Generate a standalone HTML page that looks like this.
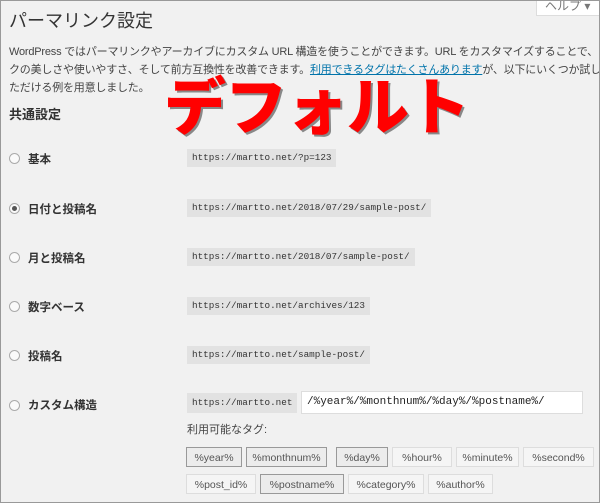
<!DOCTYPE html>
<html><head><meta charset="utf-8"><style>
body{margin:0;width:600px;height:503px;overflow:hidden;background:#f1f1f1;font-family:"Liberation Sans","Noto Sans CJK JP",sans-serif;color:#444;position:relative}
.frame{position:absolute;left:0;top:0;width:598px;height:501px;border:1px solid #999;}
.a{position:absolute;white-space:nowrap}
h1{position:absolute;left:9px;top:7px;margin:0;font-size:18px;font-weight:normal;color:#333}
.help{position:absolute;left:536px;top:-4px;width:70px;height:18px;background:#fff;border:1px solid #ddd;font-size:12px;color:#777;padding-left:8px}
.p{position:absolute;left:9px;top:43px;white-space:nowrap;font-size:11px;letter-spacing:-0.2px;line-height:18px;color:#444}
.p a{color:#0073aa;text-decoration:underline}
.h2{position:absolute;left:9px;top:104px;font-size:13px;font-weight:bold;color:#333}
.r{position:absolute;left:9px;width:9px;height:9px;border:1px solid #aaa;border-radius:50%;background:#fafafa}
.r.on::after{content:"";position:absolute;left:2px;top:2px;width:5px;height:5px;border-radius:50%;background:#555}
.l{position:absolute;left:28px;font-size:11.5px;font-weight:bold;color:#333}
code{position:absolute;left:187px;height:18px;line-height:18px;padding:0 5px;background:#e2e2e2;font-family:"Liberation Mono",monospace;font-size:9.3px;color:#333}
.in{position:absolute;left:301px;top:391px;width:275px;height:21px;background:#fff;border:1px solid #ddd;font-family:"Liberation Mono",monospace;font-size:11px;line-height:21px;padding-left:5px;color:#222}
.t{position:absolute;height:20px;line-height:20px;font-size:10.5px;color:#555;text-align:center;background:#f5f5f5;border:1px solid #ddd;box-sizing:border-box}
.t.s{background:#ececec;border:1px solid #999}
.big{position:absolute;left:164px;top:62px;font-size:62px;line-height:80px;font-weight:900;color:#f00;letter-spacing:-1px;text-shadow:2px 2px 0 #888;font-family:"Noto Sans CJK JP",sans-serif}
</style></head><body>
<div class="help">ヘルプ ▾</div>
<h1>パーマリンク設定</h1>
<div class="p">WordPress ではパーマリンクやアーカイブにカスタム URL 構造を使うことができます。URL をカスタマイズすることで、リン<br>クの美しさや使いやすさ、そして前方互換性を改善できます。<a>利用できるタグはたくさんあります</a>が、以下にいくつか試してい<br>ただける例を用意しました。</div>
<div class="h2">共通設定</div>
<div class="big">デフォルト</div>
<div class="r" style="top:153px"></div><div class="l a" style="top:151px">基本</div><code style="top:149px">https://martto.net/?p=123</code>
<div class="r on" style="top:203px"></div><div class="l a" style="top:201px">日付と投稿名</div><code style="top:199px">https://martto.net/2018/07/29/sample-post/</code>
<div class="r" style="top:252px"></div><div class="l a" style="top:250px">月と投稿名</div><code style="top:248px">https://martto.net/2018/07/sample-post/</code>
<div class="r" style="top:301px"></div><div class="l a" style="top:299px">数字ベース</div><code style="top:297px">https://martto.net/archives/123</code>
<div class="r" style="top:350px"></div><div class="l a" style="top:348px">投稿名</div><code style="top:346px">https://martto.net/sample-post/</code>
<div class="r" style="top:400px"></div><div class="l a" style="top:397px">カスタム構造</div><code style="top:393px;height:20px;line-height:20px">https://martto.net</code>
<div class="in">/%year%/%monthnum%/%day%/%postname%/</div>
<div class="a" style="left:187px;top:421px;font-size:11px">利用可能なタグ:</div>
<div class="t s" style="left:186px;top:447px;width:56px">%year%</div>
<div class="t s" style="left:246px;top:447px;width:81px">%monthnum%</div>
<div class="t s" style="left:336px;top:447px;width:52px">%day%</div>
<div class="t" style="left:392px;top:447px;width:60px">%hour%</div>
<div class="t" style="left:456px;top:447px;width:63px">%minute%</div>
<div class="t" style="left:523px;top:447px;width:71px">%second%</div>
<div class="t" style="left:186px;top:474px;width:70px">%post_id%</div>
<div class="t s" style="left:260px;top:474px;width:84px">%postname%</div>
<div class="t" style="left:348px;top:474px;width:76px">%category%</div>
<div class="t" style="left:428px;top:474px;width:65px">%author%</div>
<div class="frame"></div>
</body></html>
